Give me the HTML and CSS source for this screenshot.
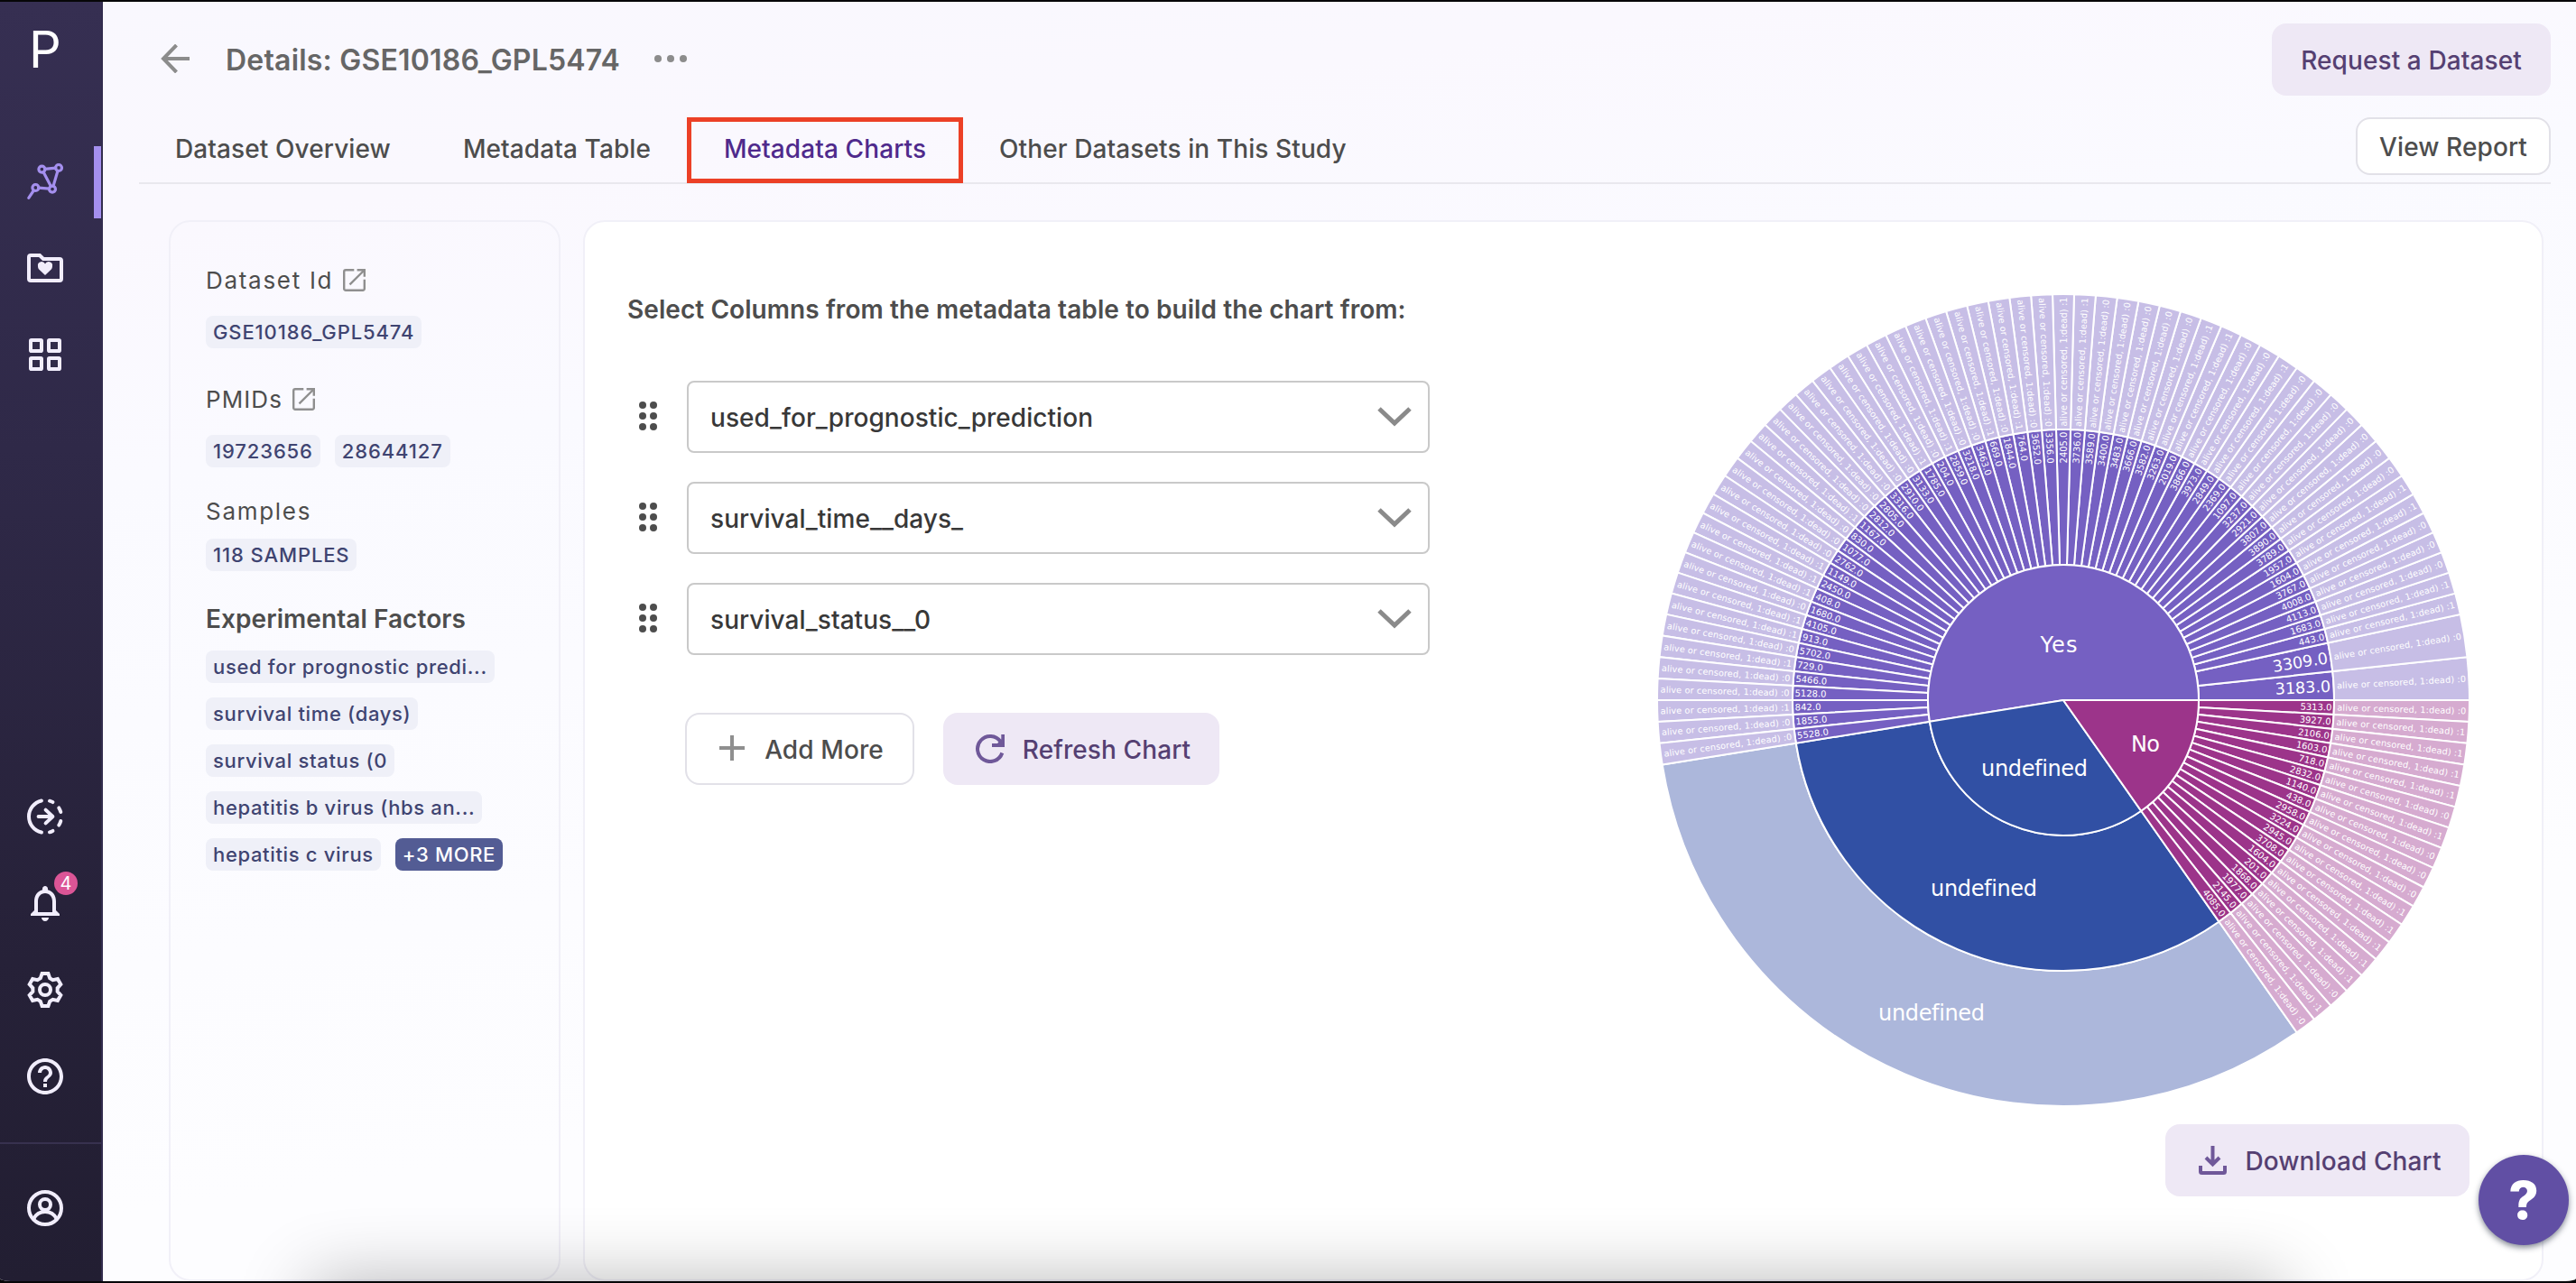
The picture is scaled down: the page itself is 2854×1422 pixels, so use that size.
FILE: index.html
```html
<!DOCTYPE html>
<html lang="en">
<head>
<meta charset="utf-8">
<title>Details: GSE10186_GPL5474</title>
<link rel="stylesheet" href="styles.css">
</head>
<body>
<div class="app">
  <nav class="sidebar">
    <div class="logo">P</div>
    <div class="nav-group">
      <a class="nav-item active"><svg class="icon" viewBox="0 0 24 24"><g class="thin"><path d="M11.8 5.2 17.9 4.6M11 6.8l4.2 8M19 6.1 16.5 14.7M8.3 15.6l6 .5M5.7 17 2.9 21.2"/><circle cx="10.2" cy="5.3" r="1.75"/><circle cx="19.5" cy="4.5" r="1.75"/><circle cx="16" cy="16.3" r="1.75"/><circle cx="6.7" cy="15.5" r="1.75"/></g></svg></a>
      <a class="nav-item"><svg class="icon" viewBox="0 0 24 24"><path class="line" d="M4 5h5l2 2h9a1 1 0 0 1 1 1v10a1 1 0 0 1-1 1H4a1 1 0 0 1-1-1V6a1 1 0 0 1 1-1z"/><path class="solid" d="M12 16l-3.3-3.1C8.2 12.3 8 11.7 8 11a2.1 2.1 0 0 1 4-1.2A2.1 2.1 0 0 1 16 11c0 .7-.2 1.3-.7 1.9z"/></svg></a>
      <a class="nav-item"><svg class="icon" viewBox="0 0 24 24"><g class="line"><rect x="4" y="4" width="6" height="6" rx=".4"/><rect x="14" y="4" width="6" height="6" rx=".4"/><rect x="4" y="14" width="6" height="6" rx=".4"/><rect x="14" y="14" width="6" height="6" rx=".4"/></g></svg></a>
    </div>
    <div class="nav-group nav-bottom">
      <a class="nav-item"><svg class="icon" viewBox="0 0 24 24"><g class="line round"><path d="M9.98 3.23A9 9 0 0 0 9.98 20.77M14.48 3.35A9 9 0 0 1 16.23 4.05M19.63 7.23A9 9 0 0 1 20.65 9.52M14.48 20.65A9 9 0 0 0 16.23 19.95M19.63 16.77A9 9 0 0 0 20.65 14.48M8.3 12h7.9M12.3 8.3l3.9 3.7-3.9 3.7"/></g></svg></a>
      <a class="nav-item"><svg class="icon" viewBox="0 0 24 24"><path class="solid" d="M12 22c1.1 0 2-.9 2-2h-4c0 1.1.9 2 2 2zm6-6v-5c0-3.07-1.63-5.64-4.5-6.32V4c0-.83-.67-1.5-1.5-1.5s-1.5.67-1.5 1.5v.68C7.64 5.36 6 7.92 6 11v5l-2 2v1h16v-1l-2-2zm-2 1H8v-6c0-2.48 1.51-4.5 4-4.5s4 2.02 4 4.5v6z"/></svg><span class="badge">4</span></a>
      <a class="nav-item"><svg class="icon" viewBox="0 0 24 24"><g class="line"><path d="M18.83 11.05L20.64 8.97L18.94 6.03L16.24 6.56L14.6 5.61L13.7 3L10.3 3L9.4 5.61L7.76 6.56L5.06 6.03L3.36 8.97L5.17 11.05L5.17 12.95L3.36 15.03L5.06 17.97L7.76 17.44L9.4 18.39L10.3 21L13.7 21L14.6 18.39L16.24 17.44L18.94 17.97L20.64 15.03L18.83 12.95Z"/><circle cx="12" cy="12" r="3"/></g></svg></a>
      <a class="nav-item"><svg class="icon" viewBox="0 0 24 24"><path class="solid" d="M11 18h2v-2h-2v2zm1-16C6.48 2 2 6.48 2 12s4.48 10 10 10 10-4.48 10-10S17.52 2 12 2zm0 18c-4.41 0-8-3.59-8-8s3.59-8 8-8 8 3.59 8 8-3.59 8-8 8zm0-14c-2.21 0-4 1.79-4 4h2c0-1.1.9-2 2-2s2 .9 2 2c0 2-3 1.75-3 5h2c0-2.25 3-2.5 3-5 0-2.21-1.79-4-4-4z"/></svg></a>
    </div>
    <div class="nav-account">
      <svg class="icon" viewBox="0 0 24 24"><g class="line"><circle cx="12" cy="12" r="9"/><circle cx="12" cy="10" r="3"/><path d="M5.6 18c1.2-2.4 3.6-4 6.4-4s5.2 1.6 6.4 4"/></g></svg>
    </div>
  </nav>

  <main class="main">
    <header class="header">
      <svg class="back" viewBox="0 0 32 32"><path d="M17.5 1 3 16l14.500 15M3 16H32"/></svg>
      <h1 class="title">Details: GSE10186_GPL5474</h1>
      <svg class="more" viewBox="0 0 36 10"><circle cx="4" cy="5" r="4"/><circle cx="18" cy="5" r="4"/><circle cx="32" cy="5" r="4"/></svg>
      <button class="btn btn-soft request">Request a Dataset</button>
    </header>
    <div class="tabs">
      <a class="tab">Dataset Overview</a>
      <a class="tab">Metadata Table</a>
      <a class="tab selected">Metadata Charts</a>
      <a class="tab">Other Datasets in This Study</a>
      <button class="btn btn-outline report">View Report</button>
    </div>

    <div class="content">
      <aside class="panel info">
        <div class="label">Dataset Id <svg class="ext" viewBox="0 0 25 25"><path d="M12.300 1.200H3A1.800 1.800 0 0 0 1.200 3V22A1.800 1.800 0 0 0 3 23.800H22A1.800 1.800 0 0 0 23.800 22V11.700M15.600 1.200H23.800V8.700M23.500 1.500 7.500 17.300"/></svg></div>
        <div class="chips wide"><span class="chip">GSE10186_GPL5474</span></div>
        <div class="label pm">PMIDs <svg class="ext" viewBox="0 0 25 25"><path d="M12.300 1.200H3A1.800 1.800 0 0 0 1.200 3V22A1.800 1.800 0 0 0 3 23.800H22A1.800 1.800 0 0 0 23.800 22V11.700M15.600 1.200H23.800V8.700M23.500 1.500 7.500 17.300"/></svg></div>
        <div class="chips wide"><span class="chip">19723656</span><span class="chip">28644127</span></div>
        <div class="label samples">Samples</div>
        <div class="chips near"><span class="chip">118 SAMPLES</span></div>
        <h2 class="factors">Experimental Factors</h2>
        <div class="chips list">
          <span class="chip">used for prognostic predi...</span>
          <span class="chip">survival time (days)</span>
          <span class="chip">survival status (0</span>
          <span class="chip">hepatitis b virus (hbs an...</span>
          <span class="chip">hepatitis c virus</span>
          <span class="chip chip-more">+3 MORE</span>
        </div>
      </aside>

      <section class="panel builder">
        <div class="form">
          <h2 class="prompt">Select Columns from the metadata table to build the chart from:</h2>
          <div class="rows">
            <div class="row"><svg class="grip" viewBox="0 0 20 32"><use href="#dots"/></svg><div class="select"><span>used_for_prognostic_prediction</span><svg class="chev" viewBox="0 0 38 22"><path d="M2 2 19 18 36 2"/></svg></div></div>
            <div class="row"><svg class="grip" viewBox="0 0 20 32"><use href="#dots"/></svg><div class="select"><span>survival_time__days_</span><svg class="chev" viewBox="0 0 38 22"><path d="M2 2 19 18 36 2"/></svg></div></div>
            <div class="row"><svg class="grip" viewBox="0 0 20 32"><g id="dots"><circle cx="4" cy="4" r="4"/><circle cx="16" cy="4" r="4"/><circle cx="4" cy="16" r="4"/><circle cx="16" cy="16" r="4"/><circle cx="4" cy="28" r="4"/><circle cx="16" cy="28" r="4"/></g></svg><div class="select"><span>survival_status__0</span><svg class="chev" viewBox="0 0 38 22"><path d="M2 2 19 18 36 2"/></svg></div></div>
          </div>
          <div class="actions">
            <button class="btn btn-outline add"><svg class="plus" viewBox="0 0 28 28"><path d="M14 0V28M0 14H28"/></svg>Add More</button>
            <button class="btn btn-soft refresh"><svg class="reload" viewBox="0 0 32 32"><path d="M29.300 20.500A14 14 0 1 1 27.500 8"/><path class="fill" d="M32.300 0V14H18V10h6L28.300 5.500V0z"/></svg>Refresh Chart</button>
          </div>
        </div>
        <div class="chart-col">
          <svg id="sunburst" class="sunburst" viewBox="-452 -452 904 904"></svg>
          <button class="btn btn-soft download"><svg class="dl" viewBox="0 0 31 32"><path d="M15.500 0V21M8 13l7.500 7.500L23 13M2 22v6.500a1.500 1.500 0 0 0 1.500 1.500h24a1.500 1.500 0 0 0 1.500-1.500V22"/></svg>Download Chart</button>
        </div>
      </section>
    </div>
  </main>
  <div class="dock-shadow"></div>
  <button class="fab">?</button>
</div>
<script src="chart.js"></script>
</body>
</html>
```
FILE: styles.css
```css
* { box-sizing: border-box; }
body { margin: 0; padding: 2px 0; height: 1422px; background: #060608; font-family: Inter, "Liberation Sans", sans-serif; overflow: hidden; }
button { font-family: inherit; margin: 0; }
h1, h2 { margin: 0; }
svg { display: block; flex: none; }

.app { position: relative; display: flex; height: 1418px; overflow: hidden; border-radius: 0 0 12px 12px / 0 0 3px 3px; background: linear-gradient(172deg, #f9f8fe 0%, #faf8fe 15%, #fafaff 30%, #fdfdff 75%, #fdfdff 100%); }

.sidebar { width: 114px; flex: none; display: flex; flex-direction: column; border-right: 2px solid #322c4e; background: linear-gradient(180deg, #362f52 0%, #2f2948 35%, #262138 75%, #221e32 100%); }
.logo { height: 159px; padding: 16px 12px 0 0; text-align: center; font-size: 56px; line-height: 75px; color: #fff; }
.nav-group { display: flex; flex-direction: column; gap: 16px; }
.nav-bottom { margin-top: auto; padding-bottom: 33px; }
.nav-item { position: relative; height: 80px; display: flex; align-items: center; padding-left: 26px; color: #f1edfc; }
.nav-item.active { color: #a48fee; }
.nav-item.active::after { content: ""; position: absolute; right: 0; top: 1px; width: 8px; height: 80px; background: #a48fee; }
.icon { width: 48px; height: 48px; }
.line { fill: none; stroke: currentColor; stroke-width: 2; }
.round { stroke-linecap: round; stroke-linejoin: round; }
.thin { fill: none; stroke: currentColor; stroke-width: 1.6; stroke-linecap: round; }
.solid { fill: currentColor; }
.badge { position: absolute; left: 60px; top: 5px; width: 26px; height: 26px; border-radius: 13px; background: #db5596; color: #fff; font-size: 20px; line-height: 26px; text-align: center; }
.nav-account { height: 154px; border-top: 2px solid #37314f; padding: 47px 0 0 26px; color: #f1edfc; }

.main { flex: 1; min-width: 0; display: flex; flex-direction: column; padding: 0 28px 0 40px; }
.header { display: flex; flex: none; height: 128px; padding: 24px 0 0 24px; }
.back { width: 32px; height: 32px; margin: 23px 40px 0 0; fill: none; stroke: #8c8c8c; stroke-width: 4; }
.title { margin-top: 21px; font-size: 32px; line-height: 40px; font-weight: 600; letter-spacing: .2px; color: #666; }
.more { width: 36px; height: 10px; fill: #8c8c8c; margin: 34px 0 0 38px; }

.btn { display: flex; align-items: center; justify-content: center; border-radius: 16px; font-size: 28px; font-weight: 500; padding: 2px 0 0; border: 0; height: 80px; letter-spacing: .1px; }
.btn-soft { background: #eee8f5; color: #554072; }
.btn-outline { background: #fff; border: 2px solid #e2e1e8; color: #4d4d4d; }
.request { width: 309px; margin-left: auto; }
.report { width: 216px; height: 64px; margin-left: auto; }

.tabs { display: flex; flex: none; height: 74px; border-bottom: 2px solid #e9e8ee; }
.tab { height: 72px; padding: 0 40px 2px; display: flex; align-items: center; font-size: 28px; font-weight: 500; letter-spacing: .1px; color: #4d4d4d; white-space: nowrap; }
.tab.selected { color: #4f2a8c; border: 5px solid #ec4026; padding: 0 0 3px; justify-content: center; width: 306px; height: 73px; }

.content { flex: 1; display: flex; gap: 25px; padding: 40px 8px 0 33px; }
.panel { border: 2px solid #f1f0f8; border-radius: 24px; height: 1176px; }
.info { width: 434px; flex: none; padding: 46px 0 0 39px; }
.label { display: flex; align-items: center; height: 36px; font-size: 26px; letter-spacing: 1.7px; color: #4d4d4d; }
.ext { width: 25px; height: 25px; margin-left: 11px; fill: none; stroke: #8f8f8f; stroke-width: 2.4; }
.pm { margin-top: 38px; letter-spacing: 1.1px; }
.samples { margin-top: 30px; margin-bottom: 1px; }
.chips { display: flex; flex-wrap: wrap; gap: 16px; }
.wide { margin-top: 22px; }
.near { margin-top: 13px; }
.list { margin-top: 17px; width: 340px; }
.chip { height: 36px; border-radius: 8px; padding: 0 8px; line-height: 36px; font-size: 22px; font-weight: 500; letter-spacing: .88px; background: #eff0f8; color: #3f4471; white-space: nowrap; }
.list .chip { letter-spacing: .66px; }
.chip.chip-more { background: #535c94; color: #fff; }
.factors { margin-top: 35px; font-size: 28px; line-height: 36px; font-weight: 600; letter-spacing: .07px; color: #4d4d4d; }

.builder { flex: 1; display: flex; justify-content: space-between; background: #fff; padding: 79px 78px 0 46px; }
.form { width: 890px; }
.prompt { padding-left: 1px; font-size: 28px; line-height: 36px; font-weight: 600; letter-spacing: .07px; color: #4d4d4d; white-space: nowrap; }
.rows { display: flex; flex-direction: column; gap: 32px; margin-top: 61px; padding-left: 14px; }
.row { display: flex; align-items: center; }
.grip { width: 20px; height: 32px; fill: #4d4d4d; margin: 0 33px 2px 0; }
.select { width: 824px; height: 80px; border: 2px solid #c9c9c9; border-radius: 8px; display: flex; align-items: center; justify-content: space-between; padding: 0 18px 0 24px; font-size: 28px; font-weight: 500; letter-spacing: .05px; color: #383838; }
.select span { padding-top: 2px; }
.chev { width: 38px; height: 22px; fill: none; stroke: #8a8a8a; stroke-width: 5; }
.actions { display: flex; gap: 32px; margin-top: 64px; padding-left: 65px; }
.add { width: 254px; padding-left: 4px; }
.refresh { width: 306px; padding-left: 4px; }
.plus { width: 28px; height: 28px; stroke: #8f8f8f; stroke-width: 4; margin: 0 22px 4px 0; }
.reload { width: 32px; height: 32px; fill: none; stroke: #6f5899; stroke-width: 4; margin: 0 20px 2px 0; }
.reload .fill { fill: #6f5899; stroke: none; }
.dl { width: 31px; height: 32px; fill: none; stroke: #6f5899; stroke-width: 4; margin: 0 20px 2px 0; }

.chart-col { width: 904px; margin-top: -1px; }
.sunburst { width: 904px; height: 904px; font-family: Verdana, "DejaVu Sans", sans-serif; font-variant-ligatures: none; }
.sunburst path { stroke: #fff; stroke-width: 2; }
.sunburst text { fill: #fff; }
.download { width: 337px; margin: 18px 2px 0 auto; padding-left: 6px; }

.dock-shadow { position: absolute; left: 345px; right: 325px; top: 1420px; height: 100px; box-shadow: 0 0 80px rgba(0, 0, 0, .3); }
.fab { position: absolute; left: 2746px; top: 1278px; width: 100px; height: 100px; border: 0; border-radius: 50%; background: #614fa4; color: #fff; font-size: 58px; font-weight: 800; line-height: 100px; padding: 0; box-shadow: 0 3px 6px rgba(20, 30, 50, .5); }
```
FILE: chart.js
```js
const NS = "http://www.w3.org/2000/svg";
const svg = document.getElementById("sunburst");
const UNIT = 360 / 118;

// survival time : survival status : sample count, counter-clockwise from 3 o'clock
const yes = ("3183:0:2 3309:0:2 443:1 1683:1 4113:0 4008:0 3767:0 1604:1 1957:1 3789:0 3890:0 3807:0 " +
  "2921:0 3237:0 1097:0 2369:0 2849:1 3973:0 3866:0 2019:1 3263:1 3582:0 3666:0 3483:0 3400:0 3589:0 3736:1 2405:1 " +
  "3356:0 3652:0 764:1 1844:0 669:1 3463:0 3218:0 2859:1 204:0 1785:1 3133:0 2910:0 3316:0 2805:0 2812:0 1167:1 " +
  "830:0 1077:0 2762:0 1149:1 2450:1 408:1 1680:0 4105:1 913:1 5702:0 729:1 5466:0 5128:0 842:1 1855:0 5528:0").split(" ");
// clockwise from 3 o'clock
const no = ("5313:0 3927:1 2106:1 1603:1 718:1 2832:0 1140:1 438:0 2958:0 3224:0 2945:1 3708:1 1604:1 201:1 " +
  "1868:1 1977:0 2145:1 4085:0").split(" ");

function el(name, attrs, text) {
  const node = document.createElementNS(NS, name);
  for (const key in attrs) node.setAttribute(key, attrs[key]);
  if (text) node.textContent = text;
  svg.appendChild(node);
}

function point(r, deg) {
  const a = deg * Math.PI / 180;
  return (r * Math.cos(a)).toFixed(2) + " " + (-r * Math.sin(a)).toFixed(2);
}

function sector(r0, r1, from, to, fill) {
  const large = to - from > 180 ? 1 : 0;
  const inner = r0 ? `L${point(r0, to)}A${r0} ${r0} 0 ${large} 1 ${point(r0, from)}` : "L0 0";
  el("path", { d: `M${point(r1, from)}A${r1} ${r1} 0 ${large} 0 ${point(r1, to)}${inner}Z`, fill });
}

function radialText(text, deg, r, anchor, size, length) {
  const flip = deg > 90.1 && deg < 270;
  const side = anchor === "middle" ? anchor : (flip ? "start" : "end");
  el("text", {
    transform: `rotate(${-deg + (flip ? 180 : 0)})`, x: flip ? -r : r, y: size * 0.36,
    "text-anchor": side, "font-size": size, textLength: length
  }, text);
}

function leaves(items, dir, dark, light) {
  let at = 0;
  for (const item of items) {
    const [time, status, count = 1] = item.split(":");
    const end = at + dir * count * UNIT;
    const lo = Math.min(at, end), hi = Math.max(at, end), mid = (lo + hi) / 2;
    sector(150, 300, lo, hi, dark);
    sector(300, 450, lo, hi, light);
    const label = time + ".0";
    if (count > 1) radialText(label, mid, 296.5, "edge", 17.6, 61.5);
    else radialText(label, mid, 297.5, "edge", 10, label.length * 5.95 - 0.8);
    radialText("alive or censored, 1:dead) :" + status, mid, 375, "middle", 9.7, 143);
    at = end;
  }
}

function label(text, x, y, length) {
  el("text", { x, y, "font-size": 24, "text-anchor": "middle", textLength: length }, text);
}

const yesEnd = 62 * UNIT, noStart = 360 - 18 * UNIT;
sector(300, 450, yesEnd, noStart, "#acb7db");
sector(150, 300, yesEnd, noStart, "#3150a4");
leaves(yes, 1, "#7560c2", "#c7bee6");
leaves(no, -1, "#9c348a", "#d6abd0");
sector(0, 150, 0, yesEnd, "#7560c2");
sector(0, 150, yesEnd, noStart, "#3150a4");
sector(0, 150, noStart, 360, "#9c348a");
label("Yes", -5, -53.5, 41);
label("No", 91, 57, 32);
label("undefined", -32, 84, 118);
label("undefined", -88, 217, 118);
label("undefined", -146, 355, 118);
```
